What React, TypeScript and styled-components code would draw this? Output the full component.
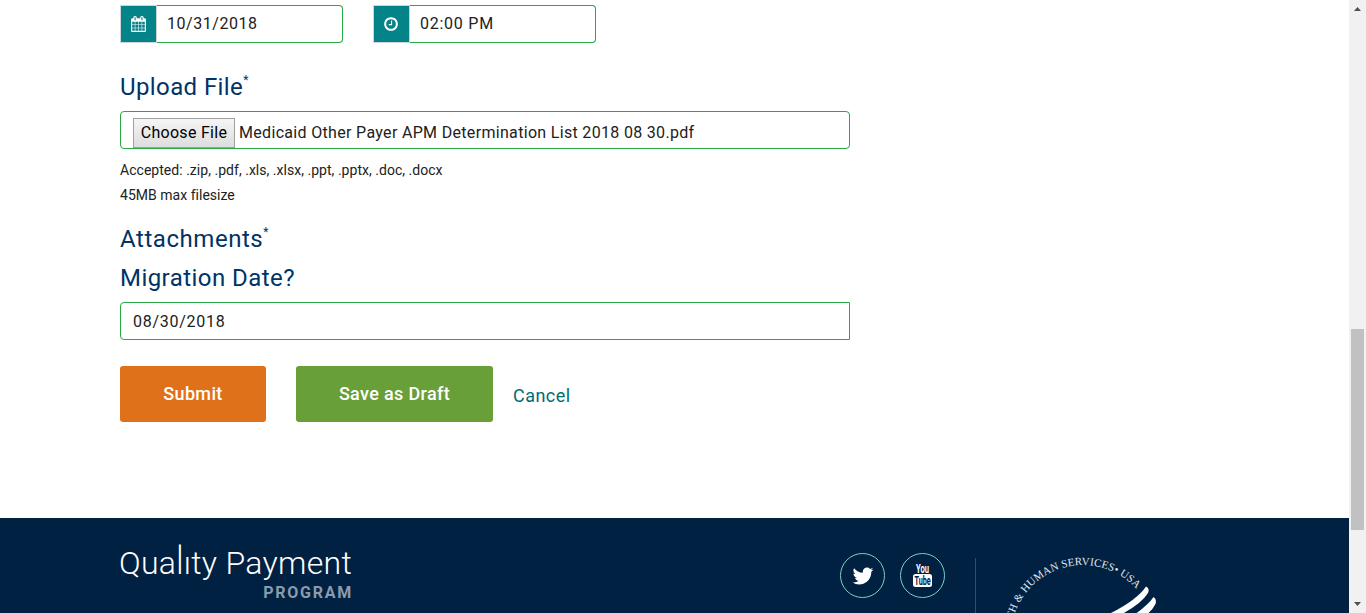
import React from 'react';
import styled, { createGlobalStyle } from 'styled-components';

const GlobalStyle = createGlobalStyle`
  * { box-sizing: border-box; }
  body { margin: 0; background: #fff; overflow: hidden; font-family: Roboto, "Liberation Sans", sans-serif; color: #212121; }
`;

const Window = styled.div`
  display: flex;
  width: 1366px;
  height: 613px;
  overflow: hidden;
`;
const Page = styled.div`
  flex: 1;
  display: flex;
  flex-direction: column;
`;
const Form = styled.main`
  height: 518px;
  padding: 5px 0 0 120px;
`;
const Row = styled.div`
  display: flex;
  gap: 30px;
`;
const Group = styled.div`
  display: flex;
  width: 223px;
  height: 38px;
`;
const Addon = styled.span`
  display: flex;
  align-items: center;
  justify-content: center;
  width: 37px;
  padding-right: 1px;
  background: #048488;
  border: 1px solid #ced4da;
`;
const GroupInput = styled.div<{ $spacing: string }>`
  flex: 1;
  border: 1px solid #28a745;
  border-left: 0;
  border-radius: 0 4px 4px 0;
  padding-left: 10px;
  font-size: 16px;
  line-height: 36px;
  letter-spacing: ${p => p.$spacing};
`;
const Heading = styled.h2<{ $top: number; $spacing: string }>`
  display: flex;
  margin: ${p => p.$top}px 0 0;
  height: 29px;
  line-height: 31px;
  font-size: 24px;
  font-weight: 400;
  color: #003366;
  white-space: nowrap;
  letter-spacing: ${p => p.$spacing};
`;
const Star = styled.sup`
  font-size: 12px;
  line-height: 16px;
`;
const Field = styled.div<{ $top: number; $square?: boolean }>`
  display: flex;
  width: 730px;
  height: 38px;
  margin-top: ${p => p.$top}px;
  padding-left: 12px;
  border: 1px solid #28a745;
  border-radius: ${p => (p.$square ? '4px 0 0 4px' : '4px')};
  font-size: 16px;
  line-height: 38px;
  letter-spacing: 0.72px;
  white-space: nowrap;
`;
const ChooseButton = styled.span`
  width: 102px;
  height: 30px;
  margin: 6px 4px 0 0;
  border: 1px solid #a0a0a0;
  background: linear-gradient(#f5f5f5, #dddddd);
  color: #000;
  line-height: 27px;
  text-align: center;
  letter-spacing: 0.3px;
`;
const FileName = styled.span`
  line-height: 41px;
  letter-spacing: 0.32px;
`;
const Hint = styled.p<{ $spacing: string }>`
  margin: 0;
  font-size: 14px;
  line-height: 25px;
  letter-spacing: ${p => p.$spacing};
`;
const Hints = styled.div`
  padding-top: 9px;
`;
const Actions = styled.div`
  display: flex;
  margin-top: 26px;
`;
const Button = styled.div<{ $color: string; $width: number; $gap: number }>`
  width: ${p => p.$width}px;
  height: 56px;
  margin-right: ${p => p.$gap}px;
  border-radius: 3px;
  background: ${p => p.$color};
  color: #fff;
  font-size: 18px;
  font-weight: 500;
  line-height: 56px;
  text-align: center;
  letter-spacing: 0.35px;
`;
const Cancel = styled.a`
  color: #046b70;
  font-size: 18px;
  line-height: 60px;
  letter-spacing: 0.45px;
`;
const Footer = styled.footer`
  display: flex;
  height: 95px;
  background: #002142;
  padding-left: 120px;
  overflow: hidden;
`;
const Brand = styled.div`
  width: 232px;
  margin-right: 488px;
  padding-top: 24px;
  color: #fff;
  white-space: nowrap;
`;
const BrandName = styled.div`
  height: 42px;
  margin-left: -1px;
  font-size: 32px;
  font-weight: 300;
  line-height: 42px;
  letter-spacing: 0.3px;
`;
const TallLetter = styled.span`
  display: inline-block;
  transform: scaleY(1.2);
  transform-origin: 50% 76%;
`;
const BrandSub = styled.div`
  color: #8c9bab;
  font-size: 16px;
  font-weight: 700;
  line-height: 17px;
  letter-spacing: 1.75px;
  text-align: right;
  margin-right: -1px;
`;
const Social = styled.a`
  display: flex;
  align-items: center;
  justify-content: center;
  width: 45px;
  height: 45px;
  margin: 35px 15px 0 0;
  border: 1px solid #7fcdc8;
  border-radius: 50%;
`;
const Divider = styled.div`
  width: 1px;
  height: 55px;
  margin: 40px 24px 0 15px;
  background: #334d68;
`;
const Scrollbar = styled.div`
  display: flex;
  flex-direction: column;
  align-items: center;
  width: 17px;
  height: 613px;
  background: #f1f1f1;
  padding-top: 7px;
`;
const Thumb = styled.div`
  width: 13px;
  height: 201px;
  margin: 318px 0 72px;
  background: #c1c1c1;
`;
const Glyph = styled.svg`
  display: block;
  overflow: visible;
`;

const CalendarIcon = () => (
  <Glyph width="15" height="16" viewBox="0 0 1664 1792" fill="#fff">
    <path d="M128 1664h288v-288h-288v288zm352 0h320v-288h-320v288zm-352-352h288v-320h-288v320zm352 0h320v-320h-320v320zm-352-384h288v-288h-288v288zm736 736h320v-288h-320v288zm-384-736h320v-288h-320v288zm768 736h288v-288h-288v288zm-384-352h320v-320h-320v320zm-352-864v-288q0-13-9.500-22.500t-22.500-9.500h-64q-13 0-22.500 9.500t-9.500 22.500v288q0 13 9.500 22.500t22.500 9.500h64q13 0 22.500-9.500t9.500-22.500zm736 864h288v-320h-288v320zm-384-384h320v-288h-320v288zm384 0h288v-288h-288v288zm32-480v-288q0-13-9.500-22.500t-22.500-9.500h-64q-13 0-22.500 9.500t-9.500 22.500v288q0 13 9.500 22.500t22.500 9.500h64q13 0 22.500-9.500t9.500-22.500zm384-64v1280q0 52-38 90t-90 38h-1408q-52 0-90-38t-38-90v-1280q0-52 38-90t90-38h128v-96q0-66 47-113t113-47h64q66 0 113 47t47 113v96h384v-96q0-66 47-113t113-47h64q66 0 113 47t47 113v96h128q52 0 90 38t38 90z" />
  </Glyph>
);
const ClockIcon = () => (
  <Glyph width="14" height="16" viewBox="0 0 1536 1792" fill="#fff">
    <path d="M896 544v448q0 14-9 23t-23 9h-320q-14 0-23-9t-9-23v-64q0-14 9-23t23-9h224v-352q0-14 9-23t23-9h64q14 0 23 9t9 23zm416 352q0-148-73-273t-198-198-273-73-273 73-198 198-73 273 73 273 198 198 273 73 273-73 198-198 73-273zm224 0q0 209-103 385.500t-279.500 279.500-385.500 103-385.500-103-279.500-279.500-103-385.500 103-385.500 279.500-279.500 385.500-103 385.500 103 279.500 279.500 103 385.500z" />
  </Glyph>
);
const TwitterIcon = () => (
  <Glyph width="22" height="24" viewBox="0 0 1664 1792" fill="#fff">
    <path d="M1620 408q-67 98-162 167 1 14 1 42 0 130-38 259.500t-115.500 248.500-184.500 210.500-258 146-323 54.500q-271 0-496-145 35 4 78 4 225 0 401-138-105-2-188-64.500t-114-159.500q33 5 61 5 43 0 85-11-112-23-185.500-111.500t-73.500-205.500v-4q68 38 146 41-66-44-105-115t-39-154q0-88 44-163 121 149 294.500 238.500t371.500 99.500q-8-38-8-74 0-134 94.500-228.500t228.500-94.500q140 0 236 102 109-21 205-78-37 115-142 178 93-10 186-50z" />
  </Glyph>
);
const YoutubeIcon = () => (
  <Glyph width="20" height="24" viewBox="0 0 20 24" fontFamily="Roboto, sans-serif" fontWeight="700">
    <g transform="translate(3 9) scale(0.680 1)">
      <text fontSize="12" fill="#fff" textLength="19" lengthAdjust="spacingAndGlyphs">You</text>
    </g>
    <rect x="0" y="10" width="19" height="13" rx="2.500" fill="#fff" />
    <g transform="translate(1.500 21) scale(0.650 1)">
      <text fontSize="12" fill="#002142" textLength="25" lengthAdjust="spacingAndGlyphs">Tube</text>
    </g>
  </Glyph>
);
const Seal = () => (
  <svg width="180" height="95" viewBox="1000 518 180 95">
    <path id="seal-arc" d="M1083 709 A72 72 0 1 1 1136.500 589" fill="none" />
    <text fill="#e3e8ed" fontFamily="Liberation Serif, serif" fontSize="11" letterSpacing="0.120" textAnchor="end">
      <textPath href="#seal-arc" startOffset="100%">HEALTH &amp; HUMAN SERVICES• USA</textPath>
    </text>
    <path fill="#fff" d="M1110 613.500 Q1137 600 1146 586.500 Q1150 588 1148 593 Q1142 603 1123 613.500Z" />
    <path fill="#fff" d="M1136 613.500 Q1149 604 1153.500 597 Q1157 599 1155.500 604 Q1153 609 1148 613.500Z" />
  </svg>
);

export default function App() {
  return (
    <Window>
      <GlobalStyle />
      <Page>
        <Form>
          <Row>
            <Group>
              <Addon><CalendarIcon /></Addon>
              <GroupInput $spacing="0.55px">10/31/2018</GroupInput>
            </Group>
            <Group>
              <Addon><ClockIcon /></Addon>
              <GroupInput $spacing="0.75px">02:00 PM</GroupInput>
            </Group>
          </Row>
          <Heading $top={29} $spacing="0.4px">Upload File<Star>*</Star></Heading>
          <Field $top={10}>
            <ChooseButton>Choose File</ChooseButton>
            <FileName>Medicaid Other Payer APM Determination List 2018 08 30.pdf</FileName>
          </Field>
          <Hints>
            <Hint $spacing="0.03px">Accepted: .zip, .pdf, .xls, .xlsx, .ppt, .pptx, .doc, .docx</Hint>
            <Hint $spacing="0.02px">45MB max filesize</Hint>
          </Hints>
          <Heading $top={16} $spacing="0.55px">Attachments<Star>*</Star></Heading>
          <Heading $top={10} $spacing="0.45px">Migration Date?</Heading>
          <Field $top={10} $square>08/30/2018</Field>
          <Actions>
            <Button $color="#df711b" $width={146} $gap={30}>Submit</Button>
            <Button $color="#689f38" $width={197} $gap={20}>Save as Draft</Button>
            <Cancel>Cancel</Cancel>
          </Actions>
        </Form>
        <Footer>
          <Brand>
            <BrandName>Qua<TallLetter>l</TallLetter>ıty Payment</BrandName>
            <BrandSub>PROGRAM</BrandSub>
          </Brand>
          <Social><TwitterIcon /></Social>
          <Social><YoutubeIcon /></Social>
          <Divider />
          <Seal />
        </Footer>
      </Page>
      <Scrollbar>
        <Glyph width="7" height="4" viewBox="0 0 7 4"><path d="M0 4L3.500 0L7 4Z" fill="#505050" /></Glyph>
        <Thumb />
        <Glyph width="7" height="4" viewBox="0 0 7 4"><path d="M0 0L3.500 4L7 0Z" fill="#505050" /></Glyph>
      </Scrollbar>
    </Window>
  );
}
